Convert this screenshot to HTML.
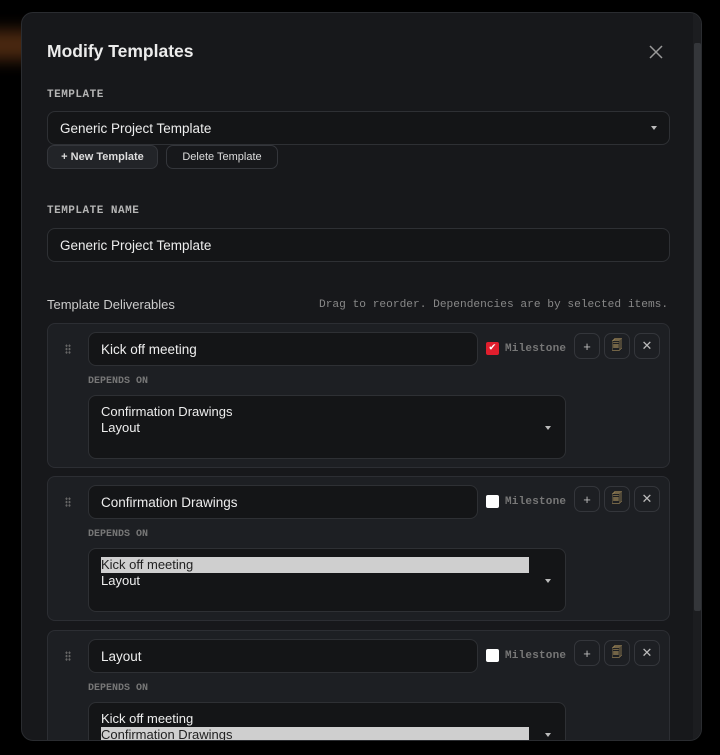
<!DOCTYPE html>
<html><head><style>
*{box-sizing:border-box;margin:0;padding:0}
body{width:720px;height:755px;background:#000;font-family:"Liberation Sans",sans-serif;overflow:hidden;position:relative}
.glow{position:absolute;left:-20px;top:30px;width:60px;height:30px;background:#6b3a18;filter:blur(8px);opacity:.7}
.modal{position:absolute;left:21px;top:12px;width:681px;height:729px;background:#17181b;border:1px solid #2a2c30;border-radius:12px;overflow:hidden}
.abs{position:absolute}
h1{position:absolute;left:25px;top:28px;font-size:17.5px;color:#ececec;font-weight:bold}
.lbl{position:absolute;font-family:"Liberation Mono",monospace;font-weight:bold;font-size:11px;color:#b5b5b5;letter-spacing:.5px}
.inp{position:absolute;background:#141517;border:1px solid #2e3034;border-radius:8px;color:#eee;font-size:13.5px;padding-left:12px;display:flex;align-items:center}
.btn{position:absolute;border:1px solid #34363b;border-radius:7px;font-size:11px;color:#ddd;display:flex;align-items:center;justify-content:center;height:24px;top:132px}
.card{position:absolute;left:25px;width:623px;height:145px;background:#1d1f23;border:1px solid #2c2e33;border-radius:8px}
.grip{position:absolute;left:17px;top:20px;width:6px;height:10px;background:radial-gradient(circle,#666 1px,transparent 1.2px) 0 0/3px 3.4px}
.ms{position:absolute;left:438px;top:18px;font-family:"Liberation Mono",monospace;font-weight:bold;font-size:11px;color:#777;display:flex;align-items:center;gap:6px;letter-spacing:.2px}
.cb{width:13px;height:13px;background:#fff;border-radius:2px;display:inline-block}
.cb.on{background:#e01e2d;color:#fff;font-size:11px;line-height:13px;text-align:center}
.ib{position:absolute;top:9px;width:26px;height:26px;border:1px solid #34363b;border-radius:7px;color:#bbb;font-size:13px;display:flex;align-items:center;justify-content:center}
.dep{position:absolute;left:40px;top:52px;font-family:"Liberation Mono",monospace;font-weight:bold;font-size:10px;color:#777}
.sel{position:absolute;left:40px;top:71px;width:478px;height:64px;background:#141517;border:1px solid #2e3034;border-radius:8px;font-size:13px;color:#eee;padding:8px 0 0 12px;line-height:16px}
.sel .h{background:#cfcfcf;color:#222;width:428px}
.arr{position:absolute;right:14px;top:30px;border:3px solid transparent;border-top:4px solid #bbb}
</style></head><body>
<div class="glow"></div>
<div class="modal">
<h1>Modify Templates</h1>
<svg class="abs" style="left:627px;top:32px" width="14" height="14"><path d="M1 1L13 13M13 1L1 13" stroke="#999" stroke-width="1.5"/></svg>
<div class="lbl" style="left:25px;top:76px">TEMPLATE</div>
<div class="inp" style="left:25px;top:98px;width:623px;height:34px">Generic Project Template<div class="arr" style="top:14px;right:12px"></div></div>
<div class="btn" style="left:25px;width:111px;background:#222428;font-weight:bold">+ New Template</div>
<div class="btn" style="left:144px;width:112px">Delete Template</div>
<div class="lbl" style="left:25px;top:192px">TEMPLATE NAME</div>
<div class="inp" style="left:25px;top:215px;width:623px;height:34px">Generic Project Template</div>
<div class="abs" style="left:25px;top:284px;font-size:13px;color:#ccc">Template Deliverables</div>
<div class="abs" style="left:297px;top:286px;font-family:'Liberation Mono',monospace;font-size:11.2px;color:#888">Drag to reorder. Dependencies are by selected items.</div>

<div class="card" style="top:310px">
<div class="grip"></div>
<div class="inp" style="left:40px;top:8px;width:390px;height:34px">Kick off meeting</div>
<div class="ms"><span class="cb on">✔</span>Milestone</div>
<div class="ib" style="left:526px">+</div><div class="ib" style="left:556px;font-size:11px;color:#c9a96a">🗐</div><div class="ib" style="left:586px">✕</div>
<div class="dep">DEPENDS ON</div>
<div class="sel"><div>Confirmation Drawings</div><div>Layout</div><div class="arr"></div></div>
</div>
<div class="card" style="top:463px">
<div class="grip"></div>
<div class="inp" style="left:40px;top:8px;width:390px;height:34px">Confirmation Drawings</div>
<div class="ms"><span class="cb"></span>Milestone</div>
<div class="ib" style="left:526px">+</div><div class="ib" style="left:556px;font-size:11px;color:#c9a96a">🗐</div><div class="ib" style="left:586px">✕</div>
<div class="dep">DEPENDS ON</div>
<div class="sel"><div class="h">Kick off meeting</div><div>Layout</div><div class="arr"></div></div>
</div>
<div class="card" style="top:617px">
<div class="grip"></div>
<div class="inp" style="left:40px;top:8px;width:390px;height:34px">Layout</div>
<div class="ms"><span class="cb"></span>Milestone</div>
<div class="ib" style="left:526px">+</div><div class="ib" style="left:556px;font-size:11px;color:#c9a96a">🗐</div><div class="ib" style="left:586px">✕</div>
<div class="dep">DEPENDS ON</div>
<div class="sel"><div>Kick off meeting</div><div class="h">Confirmation Drawings</div><div class="arr"></div></div>
</div>
<div class="abs" style="left:671px;top:0;width:8px;height:729px;background:#1c1d20"></div>
<div class="abs" style="left:672px;top:30px;width:7px;height:568px;background:#34363a;border-radius:2px"></div>
</div>
</body></html>
